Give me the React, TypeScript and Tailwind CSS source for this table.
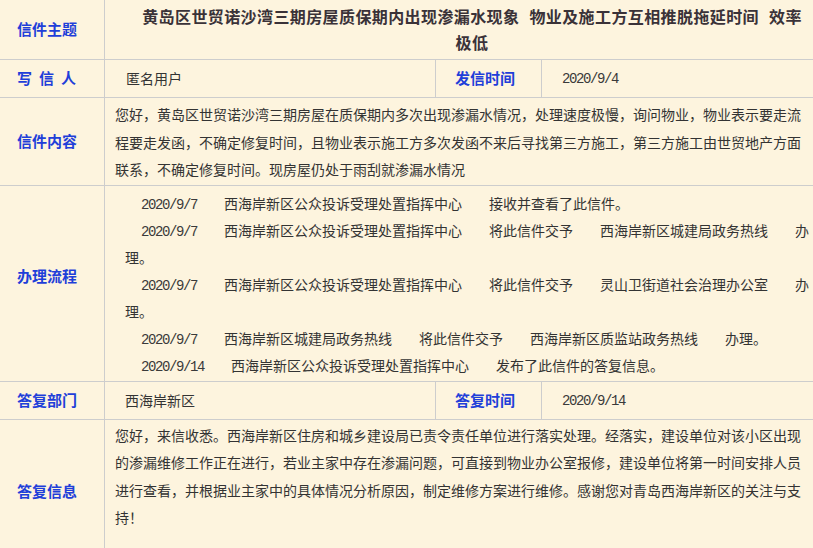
const label = "flex items-center border-r border-b border-[#cdcdcd] pl-[17px] text-[15px] font-bold text-[#1f3fd9]"
const cell = "border-b border-[#cdcdcd]"

function Gap() {
  return <span className="inline-block w-[27px]" />
}

function DateText({ children }: { children: string }) {
  return (
    <span className="font-['Liberation_Mono',monospace] leading-[14px] tracking-[-1.4px] text-[#3a3a3a]">
      {children}
    </span>
  )
}

type Step = { date: string; parts: string[] }

const steps: Step[] = [
  { date: "2020/9/7", parts: ["西海岸新区公众投诉受理处置指挥中心", "接收并查看了此信件。"] },
  { date: "2020/9/7", parts: ["西海岸新区公众投诉受理处置指挥中心", "将此信件交予", "西海岸新区城建局政务热线", "办理。"] },
  { date: "2020/9/7", parts: ["西海岸新区公众投诉受理处置指挥中心", "将此信件交予", "灵山卫街道社会治理办公室", "办理。"] },
  { date: "2020/9/7", parts: ["西海岸新区城建局政务热线", "将此信件交予", "西海岸新区质监站政务热线", "办理。"] },
  { date: "2020/9/14", parts: ["西海岸新区公众投诉受理处置指挥中心", "发布了此信件的答复信息。"] },
]

export default function App() {
  return (
    <div className="h-[548px] w-[813px] overflow-hidden bg-[#fdf4de]">
      <div className="grid w-[813px] grid-cols-[105px_331px_106px_271px] font-['Noto_Sans_CJK_SC',sans-serif] text-[14px] text-[#333]">
        {/* 信件主题 */}
        <div className={`${label} h-[60px]`}>信件主题</div>
        <div className={`${cell} col-span-3 pl-[27px] pr-[1px] pt-[3px]`}>
          <p className="text-center text-[16px] font-bold leading-[26px] tracking-[0.4px] text-[#3a3238]">
            黄岛区世贸诺沙湾三期房屋质保期内出现渗漏水现象<span className="inline-block w-[10px]" />物业及施工方互相推脱拖延时间<span className="inline-block w-[10px]" />效率
            <br />
            极低
          </p>
        </div>

        {/* 写信人 / 发信时间 */}
        <div className={`${label} h-[38px]`}>
          <span className="tracking-[7px]">写信</span>人
        </div>
        <div className={`${cell} flex items-center border-r pl-[21px]`}>匿名用户</div>
        <div className={`${label} pl-[19px]`}>发信时间</div>
        <div className={`${cell} flex items-center pl-[20px]`}>
          <DateText>2020/9/4</DateText>
        </div>

        {/* 信件内容 */}
        <div className={`${label} h-[88px]`}>信件内容</div>
        <div className={`${cell} col-span-3 pl-[10px] pt-[3px] leading-[27.5px]`}>
          您好，黄岛区世贸诺沙湾三期房屋在质保期内多次出现渗漏水情况，处理速度极慢，询问物业，物业表示要走流程要走发函，不确定修复时间，且物业表示施工方多次发函不来后寻找第三方施工，第三方施工由世贸地产方面联系，不确定修复时间。现房屋仍处于雨刮就渗漏水情况
        </div>

        {/* 办理流程 */}
        <div className={`${label} h-[196px] pb-[14px]`}>办理流程</div>
        <div className={`${cell} col-span-3 h-[196px] pl-[20px] pt-[4px] leading-[27px]`}>
          {steps.map((s, i) => (
            <p key={i} className="indent-[16px]">
              <DateText>{s.date}</DateText>
              {s.parts.map((p, j) => (
                <span key={j}>
                  <Gap />
                  {p}
                </span>
              ))}
            </p>
          ))}
        </div>

        {/* 答复部门 / 答复时间 */}
        <div className={`${label} h-[38px]`}>答复部门</div>
        <div className={`${cell} flex items-center border-r pl-[20px]`}>西海岸新区</div>
        <div className={`${label} pl-[19px]`}>答复时间</div>
        <div className={`${cell} flex items-center pl-[20px]`}>
          <DateText>2020/9/14</DateText>
        </div>

        {/* 答复信息 */}
        <div className={`${label} h-[144px]`}>答复信息</div>
        <div className={`${cell} col-span-3 pl-[10px] pt-[2px] leading-[27.3px]`}>
          您好，来信收悉。西海岸新区住房和城乡建设局已责令责任单位进行落实处理。经落实，建设单位对该小区出现的渗漏维修工作正在进行，若业主家中存在渗漏问题，可直接到物业办公室报修，建设单位将第一时间安排人员进行查看，并根据业主家中的具体情况分析原因，制定维修方案进行维修。感谢您对青岛西海岸新区的关注与支持！
        </div>
      </div>
    </div>
  )
}
